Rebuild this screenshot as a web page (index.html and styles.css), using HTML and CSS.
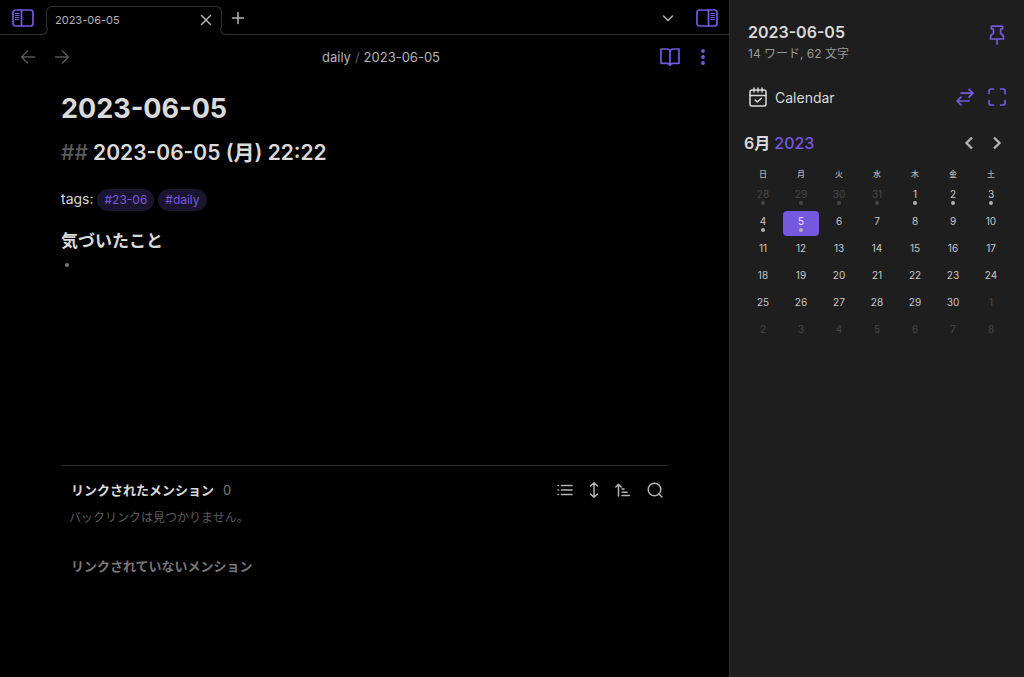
FILE: index.html
```html
<!DOCTYPE html>
<html lang="ja">
<head>
<meta charset="utf-8">
<meta name="viewport" content="width=device-width, initial-scale=1">
<title>2023-06-05</title>
<link rel="stylesheet" href="styles.css">
</head>
<body>
<div class="app">
  <main class="workspace">
    <header class="tab-bar">
      <button class="icon-btn accent panel-left" aria-label="左サイドバー">
        <svg width="22" height="18" viewBox="0 0 22 18"><rect x="1" y="1" width="20" height="16" rx="2.5"/><path d="M9.500 1v16"/><path class="thin" d="M3.500 4.500h3.500M3.500 6.500h3.500M3.500 8.500h3.500M3.500 10.500h3.500"/></svg>
      </button>
      <div class="tab">
        <span class="tab-title">2023-06-05</span>
        <button class="icon-btn tab-close" aria-label="閉じる"><svg width="12" height="12" viewBox="0 0 12 12"><path d="M1.500 1.500l9 9M10.500 1.500l-9 9"/></svg></button>
      </div>
      <button class="icon-btn new-tab" aria-label="新しいタブ"><svg width="14" height="14" viewBox="0 0 14 14"><path d="M7 1.500v11M1.500 7h11"/></svg></button>
      <button class="icon-btn tab-list" aria-label="タブ一覧"><svg width="12" height="8" viewBox="0 0 12 8"><path d="M1.500 2L6 6.500 10.500 2"/></svg></button>
      <button class="icon-btn accent" aria-label="右サイドバー">
        <svg width="22" height="18" viewBox="0 0 22 18"><rect x="1" y="1" width="20" height="16" rx="2.500"/><path d="M12.500 1v16"/><path class="thin" d="M15 4.500h3.500M15 6.500h3.500M15 8.500h3.500M15 10.500h3.500"/></svg>
      </button>
    </header>
    <div class="view-header">
      <div class="nav">
        <button class="icon-btn" aria-label="戻る"><svg width="16" height="16" viewBox="0 0 16 16"><path d="M14.500 8H1.500M7.500 2L1.500 8l6 6"/></svg></button>
        <button class="icon-btn" aria-label="進む"><svg width="16" height="16" viewBox="0 0 16 16"><path d="M1.500 8h13M8.500 2l6 6-6 6"/></svg></button>
      </div>
      <div class="breadcrumb"><span>daily</span><span class="slash">/</span><span>2023-06-05</span></div>
      <div class="view-actions">
        <button class="icon-btn accent" aria-label="閲覧表示"><svg width="20" height="18" viewBox="0 0 20 18"><path d="M1 1h5.500Q10 1 10 4.200V17.500Q9.500 15.300 7 15.300H1zM19 1h-5.500Q10 1 10 4.200V17.500Q10.500 15.300 13 15.300h6z"/></svg></button>
        <button class="icon-btn accent dots" aria-label="その他"><svg width="4" height="16" viewBox="0 0 4 16"><circle cx="2" cy="2" r="1.900"/><circle cx="2" cy="8" r="1.900"/><circle cx="2" cy="14" r="1.900"/></svg></button>
      </div>
    </div>
    <article class="note">
      <h1>2023-06-05</h1>
      <h2><span class="mark">##</span> 2023-06-05 (月) 22:22</h2>
      <p class="tags">tags: <a class="tag" href="#23-06">#23-06</a> <a class="tag" href="#daily">#daily</a></p>
      <h3>気づいたこと</h3>
      <ul class="list"><li></li></ul>
    </article>
    <section class="backlinks">
      <div class="backlinks-head">
        <h4>リンクされたメンション</h4><span class="count">0</span>
        <div class="backlinks-tools">
          <button class="icon-btn" aria-label="折りたたむ"><svg width="16" height="12" viewBox="0 0 16 12"><path d="M4.500 1.500H15M4.500 6H15M4.500 10.500H15M1 1.500h.5M1 6h.5M1 10.500h.5"/></svg></button>
          <button class="icon-btn" aria-label="文脈を表示"><svg width="10" height="16" viewBox="0 0 10 16"><path d="M5 1v14M1.500 4L5 .800 8.500 4M1.500 12L5 15.200 8.500 12"/></svg></button>
          <button class="icon-btn" aria-label="並べ替え"><svg width="16" height="14" viewBox="0 0 16 14"><path d="M3.500 13V1.500M.800 4l2.700-2.700L6.200 4M7 6h2M7 9.200h5M7 12.500h7.500"/></svg></button>
          <button class="icon-btn" aria-label="検索"><svg width="16" height="16" viewBox="0 0 16 16"><circle cx="7.500" cy="7.500" r="6.300"/><path d="M12 12l3 3"/></svg></button>
        </div>
      </div>
      <p class="empty">バックリンクは見つかりません。</p>
      <h4 class="unlinked">リンクされていないメンション</h4>
    </section>
  </main>
  <aside class="sidebar">
    <header class="note-info">
      <div>
        <h2 class="info-title">2023-06-05</h2>
        <p class="info-meta">14 ワード, 62 文字</p>
      </div>
      <button class="icon-btn accent" aria-label="ピン留め"><svg width="16" height="20" viewBox="0 0 16 20"><path d="M3.500 1.200h9q1.300 0 1.300 1.500t-1.300 1.500h-.900v4.300q2.900 1 2.900 4.300v1.200H1.500v-1.200q0-3.300 2.900-4.300V4.200h-.900q-1.300 0-1.300-1.500t1.300-1.500zM8 14v5"/></svg></button>
    </header>
    <div class="panel-title">
      <svg class="cal-icon" width="18" height="20" viewBox="0 0 18 20"><rect x="1" y="3" width="16" height="16" rx="2"/><path d="M1 8.500h16M5 1v4M13 1v4M9 1v4M6.200 13l2 2 4-3.500"/></svg>
      <span>Calendar</span>
      <div class="panel-tools">
        <button class="icon-btn accent" aria-label="切り替え"><svg width="18" height="18" viewBox="0 0 18 18"><path d="M5 5.200h12M13 1.300l4 3.900-4 3.900M13 13H1M5 9.100L1 13l4 3.900"/></svg></button>
        <button class="icon-btn accent" aria-label="展開"><svg width="18" height="18" viewBox="0 0 18 18"><path d="M1 5.500V3q0-2 2-2h2.500M12.500 1H15q2 0 2 2v2.500M17 12.500V15q0 2-2 2h-2.500M5.500 17H3q-2 0-2-2v-2.500"/></svg></button>
      </div>
    </div>
    <section class="calendar">
      <div class="month-bar">
        <h3 class="month">6月 <span>2023</span></h3>
        <button class="icon-btn" aria-label="前の月"><svg width="10" height="14" viewBox="0 0 10 14"><path d="M8 1.500L2.500 7 8 12.500"/></svg></button>
        <button class="icon-btn" aria-label="次の月"><svg width="10" height="14" viewBox="0 0 10 14"><path d="M2 1.500L7.500 7 2 12.500"/></svg></button>
      </div>
      <table>
        <thead><tr><th>日</th><th>月</th><th>火</th><th>水</th><th>木</th><th>金</th><th>土</th></tr></thead>
        <tbody>
          <tr><td class="out dot">28</td><td class="out dot">29</td><td class="out dot">30</td><td class="out dot">31</td><td class="dot">1</td><td class="dot">2</td><td class="dot">3</td></tr>
          <tr><td class="dot">4</td><td class="dot today">5</td><td>6</td><td>7</td><td>8</td><td>9</td><td>10</td></tr>
          <tr><td>11</td><td>12</td><td>13</td><td>14</td><td>15</td><td>16</td><td>17</td></tr>
          <tr><td>18</td><td>19</td><td>20</td><td>21</td><td>22</td><td>23</td><td>24</td></tr>
          <tr><td>25</td><td>26</td><td>27</td><td>28</td><td>29</td><td>30</td><td class="out">1</td></tr>
          <tr><td class="out">2</td><td class="out">3</td><td class="out">4</td><td class="out">5</td><td class="out">6</td><td class="out">7</td><td class="out">8</td></tr>
        </tbody>
      </table>
    </section>
  </aside>
</div>
</body>
</html>
```
FILE: styles.css
```css
:root {
  --accent: #7558e0;
  --text: #dadada;
  --muted: #b3b3b3;
  --faint: #5c5c5c;
  --line: #303030;
}
* { box-sizing: border-box; margin: 0; padding: 0; }
body {
  background: #000;
  color: var(--text);
  font-family: Inter, "Noto Sans CJK JP", sans-serif;
  font-size: 14px;
}
.app { display: flex; min-height: 100vh; }
.workspace { flex: 1; min-width: 0; display: flex; flex-direction: column; }

.icon-btn {
  display: flex;
  align-items: center;
  justify-content: center;
  border: 0;
  background: none;
  color: var(--muted);
  cursor: pointer;
}
svg {
  display: block;
  fill: none;
  stroke: currentColor;
  stroke-width: 1.5;
  stroke-linecap: round;
  stroke-linejoin: round;
}
.accent { color: var(--accent); }
.accent svg { stroke-width: 1.7; }
.accent svg .thin { stroke-width: 1.1; }

.tab-bar {
  display: flex;
  align-items: center;
  height: 35px;
  padding: 1px 11px 0 12px;
  border-bottom: 1px solid var(--line);
}
.panel-left { margin-right: 12px; }
.tab {
  position: relative;
  align-self: flex-end;
  display: flex;
  align-items: center;
  justify-content: space-between;
  width: 176px;
  height: 29px;
  margin-bottom: -1px;
  padding: 0 9px 2px 8px;
  background: #000;
  border: 1px solid var(--line);
  border-bottom: 0;
  border-radius: 6px 6px 0 0;
}
.tab::before, .tab::after {
  content: "";
  position: absolute;
  bottom: 0;
  width: 6px;
  height: 6px;
  background: #000;
  border-bottom: 1px solid var(--line);
}
.tab::before {
  left: -6px;
  border-right: 1px solid var(--line);
  border-bottom-right-radius: 6px;
  box-shadow: 1px 1px 0 #000;
  clip-path: inset(0);
}
.tab::after {
  right: -6px;
  border-left: 1px solid var(--line);
  border-bottom-left-radius: 6px;
  box-shadow: -1px 1px 0 #000;
  clip-path: inset(0);
}
.tab-title { color: var(--muted); font-size: 11px; }
.new-tab { margin-left: 9px; }
.tab-list { margin: 0 22px 0 auto; }

.view-header {
  display: flex;
  align-items: center;
  justify-content: space-between;
  height: 44px;
  padding: 0 24px 0 20px;
}
.nav { display: flex; gap: 18px; }
.nav .icon-btn { color: #555; }
.breadcrumb { display: flex; gap: 4px; padding-left: 32px; color: var(--muted); font-size: 13px; }
.slash { color: var(--faint); }
.view-actions { display: flex; gap: 21px; }
.accent.dots svg { fill: currentColor; stroke: none; }

.note { padding: 10px 61px 0; }
h1 { font-size: 27px; line-height: 40px; font-weight: 700; }
.note h2 { margin-top: 8px; font-size: 21px; line-height: 32px; font-weight: 600; }
.mark { color: var(--faint); font-weight: 500; }
.tags { margin-top: 18px; line-height: 24px; }
.tag {
  display: inline-block;
  padding: 0 7px;
  border-radius: 11px;
  background: #1b142e;
  color: var(--accent);
  font-size: 12px;
  line-height: 22px;
  text-decoration: none;
}
.note h3 { margin-top: 16px; font-size: 17px; line-height: 28px; font-weight: 600; }
.list { padding: 8px 4px; list-style: none; }
.list li { width: 4px; height: 4px; border-radius: 50%; background: #777; }

.backlinks { flex: 0 0 212px; margin: auto 61px 0; border-top: 1px solid var(--line); padding: 12px 5px 0 8px; }
.backlinks-head { display: flex; align-items: center; height: 24px; padding-left: 2px; }
h4 { font-size: 13px; line-height: 24px; font-weight: 600; }
.count { margin-left: 9px; color: #777; font-size: 13px; }
.backlinks-tools { display: flex; gap: 16px; margin-left: auto; }
.empty { margin-top: 4px; color: #5c5c5c; font-size: 12px; line-height: 24px; }
.unlinked { margin-top: 24px; padding-left: 2px; color: #777; }

.sidebar {
  flex: 0 0 295px;
  background: #1e1e1e;
  border-left: 1px solid #2e2e2e;
  padding: 20px 14px;
}
.note-info { display: flex; justify-content: space-between; padding: 0 5px 0 4px; }
.info-title { font-size: 16px; line-height: 24px; font-weight: 600; }
.info-meta { color: #999; font-size: 12px; line-height: 20px; }
.note-info .icon-btn { height: 30px; }
.panel-title { display: flex; align-items: center; gap: 8px; height: 26px; margin-top: 20px; padding: 0 4px 0 5px; }
.panel-tools { display: flex; gap: 14px; margin-left: auto; }
.calendar { margin-top: 19px; }
.month-bar { display: flex; align-items: center; height: 28px; padding-right: 8px; }
.month { margin-right: auto; font-size: 16px; line-height: 28px; font-weight: 600; }
.month span { color: var(--accent); font-weight: 500; }
.month-bar .icon-btn + .icon-btn { margin-left: 18px; }
.month-bar svg { stroke-width: 2.4; stroke-linecap: butt; stroke-linejoin: miter; }
table { width: 100%; margin-top: 7px; border-collapse: separate; border-spacing: 0; table-layout: fixed; }
th { height: 19px; font-size: 8px; line-height: 14px; font-weight: 500; color: var(--muted); }
td {
  height: 27px;
  padding-top: 3px;
  border: 1px solid transparent;
  border-radius: 5px;
  background-clip: padding-box;
  color: #c8c8c8;
  font-size: 10px;
  line-height: 14px;
  text-align: center;
  vertical-align: top;
}
td.dot::after {
  content: "";
  display: block;
  width: 4px;
  height: 4px;
  margin: 0 auto;
  border-radius: 50%;
  background: #b3b3b3;
}
td.out { color: #484848; }
td.out.dot::after { background: #484848; }
td.today { background-color: var(--accent); color: #eee; }
```
